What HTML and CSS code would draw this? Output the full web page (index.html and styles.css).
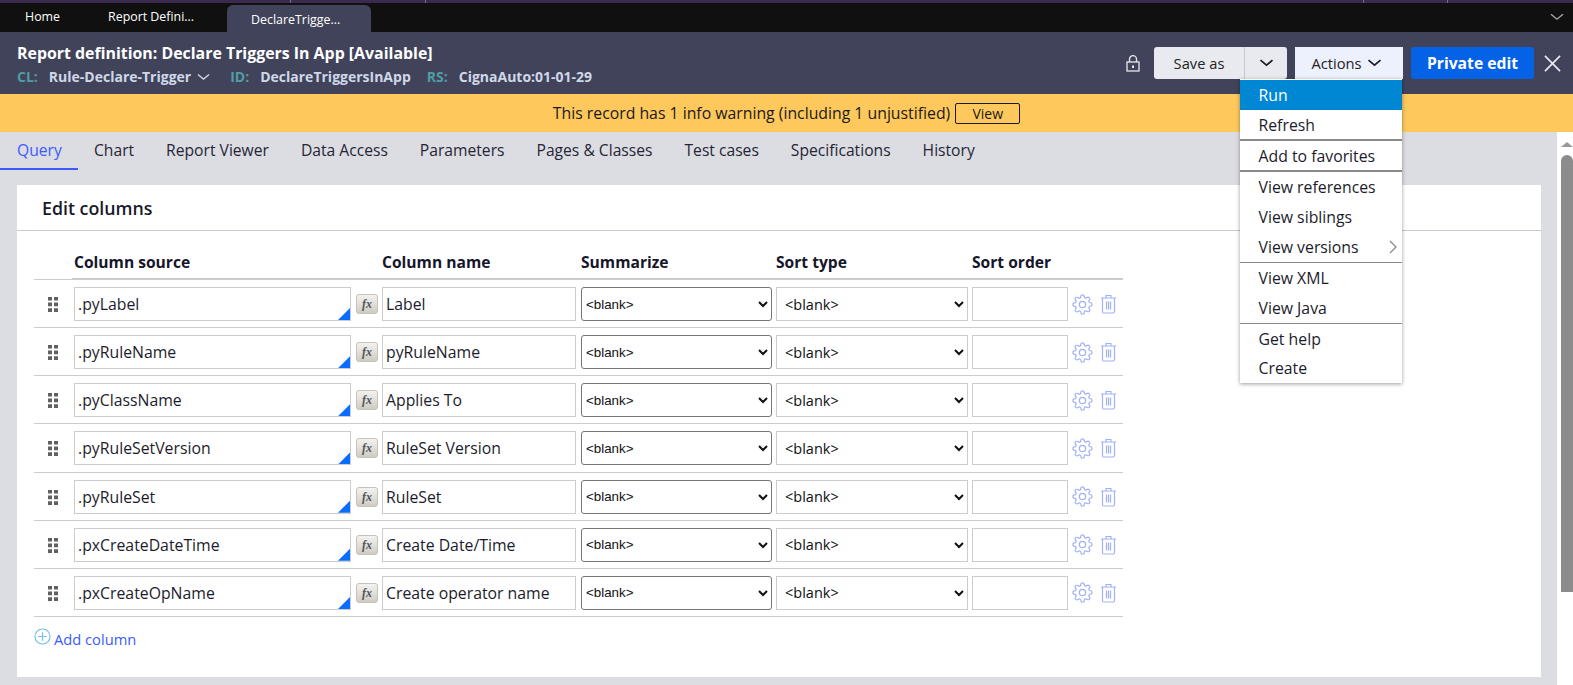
FILE: index.html
```html
<!DOCTYPE html>
<html lang="en">
<head>
<meta charset="utf-8">
<title>Report definition</title>
<link rel="stylesheet" href="styles.css">
</head>
<body>
<svg class="defs" width="0" height="0" aria-hidden="true">
  <symbol id="gear" viewBox="0 0 24 24"><circle cx="12" cy="12" r="3.6"/><path d="M19.4 15a1.65 1.65 0 0 0 .33 1.82l.06.06a2 2 0 0 1 0 2.83 2 2 0 0 1-2.83 0l-.06-.06a1.65 1.65 0 0 0-1.82-.33 1.65 1.65 0 0 0-1 1.51V21a2 2 0 0 1-2 2 2 2 0 0 1-2-2v-.09A1.65 1.65 0 0 0 9 19.4a1.65 1.65 0 0 0-1.82.33l-.06.06a2 2 0 0 1-2.83 0 2 2 0 0 1 0-2.83l.06-.06a1.65 1.65 0 0 0 .33-1.82 1.65 1.65 0 0 0-1.51-1H3a2 2 0 0 1-2-2 2 2 0 0 1 2-2h.09A1.65 1.65 0 0 0 4.6 9a1.65 1.65 0 0 0-.33-1.82l-.06-.06a2 2 0 0 1 0-2.83 2 2 0 0 1 2.83 0l.06.06a1.65 1.65 0 0 0 1.82.33H9a1.65 1.65 0 0 0 1-1.51V3a2 2 0 0 1 2-2 2 2 0 0 1 2 2v.09a1.65 1.65 0 0 0 1 1.51 1.65 1.65 0 0 0 1.82-.33l.06-.06a2 2 0 0 1 2.83 0 2 2 0 0 1 0 2.83l-.06.06a1.65 1.65 0 0 0-.33 1.82V9a1.65 1.65 0 0 0 1.51 1H21a2 2 0 0 1 2 2 2 2 0 0 1-2 2h-.09a1.65 1.65 0 0 0-1.51 1z"/></symbol>
  <symbol id="trash" viewBox="0 0 17 20"><path d="M1 4h15M6 4V1.5h5V4M2.5 4v13.5a1.5 1.5 0 0 0 1.5 1.5h9a1.5 1.5 0 0 0 1.5-1.5V4M6.5 7.5v8M8.5 7.5v8M10.5 7.5v8"/></symbol>
  <symbol id="grip" viewBox="0 0 10 15"><path d="M0 0h4v3.6H0zM6 0h4v3.6H6zM0 5.6h4v3.6H0zM6 5.6h4v3.6H6zM0 11.2h4v3.8H0zM6 11.2h4v3.8H6z"/></symbol>
  <symbol id="chev" viewBox="0 0 14 8"><path d="M1 1.2l6 5 6-5"/></symbol>
</svg>

<div class="strip">
  <span class="strip-mark m1"></span><span class="strip-mark m2"></span><span class="strip-mark m3"></span><span class="strip-mark m4"></span>
</div>
<nav class="doc-tabs">
  <span class="doc-tab tab-home">Home</span>
  <span class="doc-tab tab-report">Report Defini...</span>
  <span class="doc-tab tab-active">DeclareTrigge...</span>
  <svg class="ico-chev tabs-chev"><use href="#chev"/></svg>
</nav>

<header class="rule-head">
  <div class="rule-info">
    <h1 class="rule-title">Report definition: Declare Triggers In App [Available]</h1>
    <div class="rule-meta">
      <span class="k">CL:</span><span class="v">Rule-Declare-Trigger</span><svg class="ico-chev meta-chev"><use href="#chev"/></svg>
      <span class="k k-id">ID:</span><span class="v">DeclareTriggersInApp</span>
      <span class="k k-rs">RS:</span><span class="v">CignaAuto:01-01-29</span>
    </div>
  </div>
  <div class="rule-actions">
    <svg class="lock" viewBox="0 0 14 17"><path d="M3.5 7V4.2a3.5 3.5 0 0 1 7 0V7"/><rect x="1" y="7" width="12" height="9"/><path class="lock-dot" d="M6 10.5h2v2.5H6z"/></svg>
    <div class="btn-save">Save as</div>
    <div class="btn-save-arrow"><svg class="ico-chev dark-chev"><use href="#chev"/></svg></div>
    <div class="btn-actions">Actions<svg class="ico-chev dark-chev"><use href="#chev"/></svg></div>
    <div class="btn-primary">Private edit</div>
    <svg class="close" viewBox="0 0 18 18"><path d="M1 1l16 16M17 1L1 17"/></svg>
  </div>
</header>

<div class="warn">
  <span>This record has 1 info warning (including 1 unjustified)</span>
  <span class="warn-btn">View</span>
</div>

<div class="body-wrap">
  <main class="content">
    <nav class="rule-tabs">
      <span class="rule-tab active">Query</span>
      <span class="rule-tab">Chart</span>
      <span class="rule-tab">Report Viewer</span>
      <span class="rule-tab">Data Access</span>
      <span class="rule-tab">Parameters</span>
      <span class="rule-tab">Pages &amp; Classes</span>
      <span class="rule-tab">Test cases</span>
      <span class="rule-tab">Specifications</span>
      <span class="rule-tab">History</span>
    </nav>
    <section class="card">
      <h2 class="card-title">Edit columns</h2>
      <div class="table">
        <div class="row row-head">
          <span></span>
          <span class="th th-source">Column source</span>
          <span class="th">Column name</span>
          <span class="th">Summarize</span>
          <span class="th">Sort type</span>
          <span class="th">Sort order</span>
        </div>

        <div class="row">
          <svg class="grip"><use href="#grip"/></svg>
          <div class="field source">.pyLabel</div><span class="fx">fx</span>
          <div class="pad5"><div class="field">Label</div></div>
          <div class="pad4"><select class="sel-a"><option>&lt;blank&gt;</option></select></div>
          <div class="pad4"><select class="sel-b"><option>&lt;blank&gt;</option></select></div>
          <div class="field"></div>
          <div class="row-icons"><svg class="gear"><use href="#gear"/></svg><svg class="trash"><use href="#trash"/></svg></div>
        </div>
        <div class="row">
          <svg class="grip"><use href="#grip"/></svg>
          <div class="field source">.pyRuleName</div><span class="fx">fx</span>
          <div class="pad5"><div class="field">pyRuleName</div></div>
          <div class="pad4"><select class="sel-a"><option>&lt;blank&gt;</option></select></div>
          <div class="pad4"><select class="sel-b"><option>&lt;blank&gt;</option></select></div>
          <div class="field"></div>
          <div class="row-icons"><svg class="gear"><use href="#gear"/></svg><svg class="trash"><use href="#trash"/></svg></div>
        </div>
        <div class="row">
          <svg class="grip"><use href="#grip"/></svg>
          <div class="field source">.pyClassName</div><span class="fx">fx</span>
          <div class="pad5"><div class="field">Applies To</div></div>
          <div class="pad4"><select class="sel-a"><option>&lt;blank&gt;</option></select></div>
          <div class="pad4"><select class="sel-b"><option>&lt;blank&gt;</option></select></div>
          <div class="field"></div>
          <div class="row-icons"><svg class="gear"><use href="#gear"/></svg><svg class="trash"><use href="#trash"/></svg></div>
        </div>
        <div class="row">
          <svg class="grip"><use href="#grip"/></svg>
          <div class="field source">.pyRuleSetVersion</div><span class="fx">fx</span>
          <div class="pad5"><div class="field">RuleSet Version</div></div>
          <div class="pad4"><select class="sel-a"><option>&lt;blank&gt;</option></select></div>
          <div class="pad4"><select class="sel-b"><option>&lt;blank&gt;</option></select></div>
          <div class="field"></div>
          <div class="row-icons"><svg class="gear"><use href="#gear"/></svg><svg class="trash"><use href="#trash"/></svg></div>
        </div>
        <div class="row">
          <svg class="grip"><use href="#grip"/></svg>
          <div class="field source">.pyRuleSet</div><span class="fx">fx</span>
          <div class="pad5"><div class="field">RuleSet</div></div>
          <div class="pad4"><select class="sel-a"><option>&lt;blank&gt;</option></select></div>
          <div class="pad4"><select class="sel-b"><option>&lt;blank&gt;</option></select></div>
          <div class="field"></div>
          <div class="row-icons"><svg class="gear"><use href="#gear"/></svg><svg class="trash"><use href="#trash"/></svg></div>
        </div>
        <div class="row">
          <svg class="grip"><use href="#grip"/></svg>
          <div class="field source">.pxCreateDateTime</div><span class="fx">fx</span>
          <div class="pad5"><div class="field">Create Date/Time</div></div>
          <div class="pad4"><select class="sel-a"><option>&lt;blank&gt;</option></select></div>
          <div class="pad4"><select class="sel-b"><option>&lt;blank&gt;</option></select></div>
          <div class="field"></div>
          <div class="row-icons"><svg class="gear"><use href="#gear"/></svg><svg class="trash"><use href="#trash"/></svg></div>
        </div>
        <div class="row">
          <svg class="grip"><use href="#grip"/></svg>
          <div class="field source">.pxCreateOpName</div><span class="fx">fx</span>
          <div class="pad5"><div class="field">Create operator name</div></div>
          <div class="pad4"><select class="sel-a"><option>&lt;blank&gt;</option></select></div>
          <div class="pad4"><select class="sel-b"><option>&lt;blank&gt;</option></select></div>
          <div class="field"></div>
          <div class="row-icons"><svg class="gear"><use href="#gear"/></svg><svg class="trash"><use href="#trash"/></svg></div>
        </div>
      </div>
      <div class="add-col">
        <svg class="add-ico" viewBox="0 0 18 18"><circle cx="9" cy="9" r="8"/><path d="M9 4.5v9M4.5 9h9"/></svg>
        <span>Add column</span>
      </div>
    </section>
  </main>
  <aside class="scrollbar">
    <span class="sb-arrow"></span>
    <span class="sb-thumb"></span>
  </aside>
</div>

<ul class="menu">
  <li class="mi hot">Run</li>
  <li class="mi sep2">Refresh</li>
  <li class="mi sep2">Add to favorites</li>
  <li class="mi">View references</li>
  <li class="mi">View siblings</li>
  <li class="mi sep1 has-sub">View versions<svg class="sub-arrow" viewBox="0 0 8 14"><path d="M1 1l6 6-6 6"/></svg></li>
  <li class="mi">View XML</li>
  <li class="mi sep1">View Java</li>
  <li class="mi">Get help</li>
  <li class="mi">Create</li>
</ul>
</body>
</html>
```
FILE: styles.css
```css
* { box-sizing: border-box; }
html, body { margin: 0; height: 685px; overflow: hidden; }
body { font-family: "Open Sans", "Liberation Sans", sans-serif; color: #1a1a2a; background: #dcdde2; position: relative; }
.defs { position: absolute; }

.strip { height: 3px; background: #3b2a50; position: relative; }
.strip-mark { position: absolute; top: 0; width: 1px; height: 3px; background: #77708a; }
.m1 { left: 290px; } .m2 { left: 425px; } .m3 { left: 1363px; } .m4 { left: 1447px; }

.doc-tabs { height: 29px; background: #101010; display: flex; align-items: flex-end; position: relative; }
.doc-tab { font-size: 12.4px; color: #fff; white-space: nowrap; }
.tab-home { margin: 0 0 7px 25px; }
.tab-report { margin: 0 0 7px 48px; }
.tab-active { margin-left: 33px; width: 144px; height: 27px; background: #41435a; border-radius: 6px 6px 0 0; padding: 6px 0 0 24px; }
.ico-chev { fill: none; stroke: currentColor; stroke-width: 1.4; }
.tabs-chev { position: absolute; right: 9px; top: 10px; width: 14px; height: 8px; color: #a8a8a8; }

.rule-head { height: 62px; background: #41435a; display: flex; justify-content: space-between; padding: 0 12px 0 17px; }
.rule-title { margin: 9px 0 0; font-size: 15.9px; font-weight: 700; line-height: 24px; color: #fff; }
.rule-meta { display: flex; align-items: center; margin-top: 2px; font-size: 14px; font-weight: 700; line-height: 20px; }
.k { color: #4e9ea3; margin-right: 11px; }
.v { color: #cfd8e8; }
.k-id { margin-left: 20px; }
.k-rs { margin-left: 16px; }
.meta-chev { width: 13px; height: 8px; margin-left: 6px; color: #cfd8e8; }

.rule-actions { display: flex; align-items: center; height: 32px; margin-top: 15px; }
.lock { width: 14px; height: 17px; margin-right: 14px; fill: none; stroke: #e8e8ee; stroke-width: 1.3; }
.lock-dot { fill: #e8e8ee; stroke: none; }
.btn-save, .btn-save-arrow, .btn-actions, .btn-primary { height: 32px; display: flex; align-items: center; justify-content: center; font-size: 14.7px; }
.btn-save { width: 90px; background: #e9eaef; border-radius: 3px 0 0 3px; color: #222; }
.btn-save-arrow { width: 43px; background: #e9eaef; border-left: 1px solid #c8c9d0; border-radius: 0 3px 3px 0; }
.dark-chev { width: 15px; height: 8px; color: #1a1a2a; stroke-width: 1.7; }
.btn-actions { width: 108px; margin-left: 8px; background: #edf0fd; color: #222; gap: 5px; padding-right: 5px; }
.btn-primary { width: 123px; margin-left: 8px; background: #0462e6; color: #fff; font-weight: 700; font-size: 15.7px; border-radius: 3px; }
.close { width: 17px; height: 17px; margin-left: 10px; fill: none; stroke: #e8e8ee; stroke-width: 1.8; }

.warn { height: 38px; background: #fec85c; display: flex; align-items: center; justify-content: center; gap: 5px; font-size: 15.8px; color: #1a1a1a; }
.warn-btn { width: 65px; height: 21px; border: 1px solid #1a1a1a; border-radius: 2px; font-size: 14px; line-height: 19px; text-align: center; }

.body-wrap { display: flex; height: 553px; }
.content { flex: 1; min-width: 0; }
.scrollbar { width: 16px; background: #fff; position: relative; padding: 10px 0 0 4px; display: flex; flex-direction: column; }
.sb-arrow { width: 0; height: 0; border: 6px solid transparent; border-top: 0; border-bottom: 5px solid #999; }
.sb-thumb { width: 12px; height: 437px; background: #8c8c8c; border-radius: 6px 6px 0 0; margin-top: 8px; }

.rule-tabs { height: 38px; display: flex; }
.rule-tab { font-size: 15.65px; line-height: 37px; padding: 0 16px; color: #252535; white-space: nowrap; height: 38px; }
.rule-tab.active { color: #3b5bfd; border-bottom: 2px solid #3b5bfd; padding-left: 17px; width: 78px; }

.card { background: #fff; margin: 15px 16px 0 17px; height: 492px; }
.card-title { margin: 0; height: 46px; font-size: 17.8px; font-weight: 600; line-height: 47px; padding-left: 25px; border-bottom: 1px solid #c9c9d2; color: #1a1a2a; }

.table { width: 1089px; margin-left: 17px; }
.row { display: grid; grid-template-columns: 40px 277px 31px 199px 195px 196px 96px 55px; height: 48.17px; padding-top: 7px; border-bottom: 1px solid #ccc; align-items: start; }
.row-head { grid-template-columns: 40px 308px 199px 195px 196px 96px; height: 49px; padding-top: 21px; border-bottom: 1px solid #ccc; position: relative; }
.row-head::after { content: ""; position: absolute; left: 38px; right: 0; bottom: -1px; height: 2px; background: #ccc; }
.th { font-size: 15.6px; font-weight: 700; line-height: 20px; color: #16162a; white-space: nowrap; }
.grip { width: 10px; height: 15px; margin: 10px 0 0 14px; fill: #616161; }
.field { height: 34px; border: 1px solid #ccc; font-size: 15.8px; line-height: 32px; padding-left: 3px; background: #fff; white-space: nowrap; color: #1c1c2c; position: relative; }
.source::after { content: ""; position: absolute; right: 0; bottom: 0; width: 12px; height: 12px; background: #0a6cff; clip-path: polygon(100% 0, 100% 100%, 0 100%); }
.fx { width: 22px; height: 20px; margin: 7px 0 0 5px; border: 1px solid #c6c2ba; border-radius: 3px; background: linear-gradient(#f3f2ef, #cfccc5); font: italic 700 12px/18px "Liberation Serif", serif; color: #555; text-align: center; }
.pad5 { padding-right: 5px; }
.pad4 { padding-right: 4px; }
select { width: 100%; height: 34px; display: block; background: #fff; color: #111; }
.sel-a { font: 13.33px "Liberation Sans", sans-serif; border: 1px solid #767676; border-radius: 3px; }
.sel-b { font: 14.5px "Open Sans", sans-serif; border: 1px solid #ccc; border-radius: 0; padding-left: 4px; }
.row-icons { display: flex; align-items: center; height: 34px; padding-left: 4px; gap: 7px; }
.gear { width: 21px; height: 21px; fill: none; stroke: #9fb1f9; stroke-width: 1.4; }
.trash { width: 17px; height: 20px; fill: none; stroke: #9fb1f9; stroke-width: 1.2; }

.add-col { display: flex; align-items: center; gap: 3px; margin: 10px 0 0 17px; font-size: 14.7px; line-height: 24px; color: #3b5bfd; }
.add-ico { width: 17px; height: 17px; margin-top: -5px; fill: none; stroke: #74bde8; stroke-width: 1.2; }

.menu { position: absolute; left: 1240px; top: 79px; width: 162px; margin: 0; padding: 1px 0 0; list-style: none; background: #fff; box-shadow: 0 1px 4px rgba(0,0,0,.4); }
.mi { height: 29.9px; padding-left: 18.5px; font-size: 15.8px; line-height: 31px; color: #1c1c2c; position: relative; }
.mi.hot { background: #0087d4; color: #fff; }
.sep2 { height: 31px; border-bottom: 2px solid #8a8a8a; }
.sep1 { height: 31px; border-bottom: 1px solid #8a8a8a; }
.sub-arrow { position: absolute; right: 5px; top: 8px; width: 8px; height: 14px; fill: none; stroke: #8a8a8a; stroke-width: 1.3; }
```
